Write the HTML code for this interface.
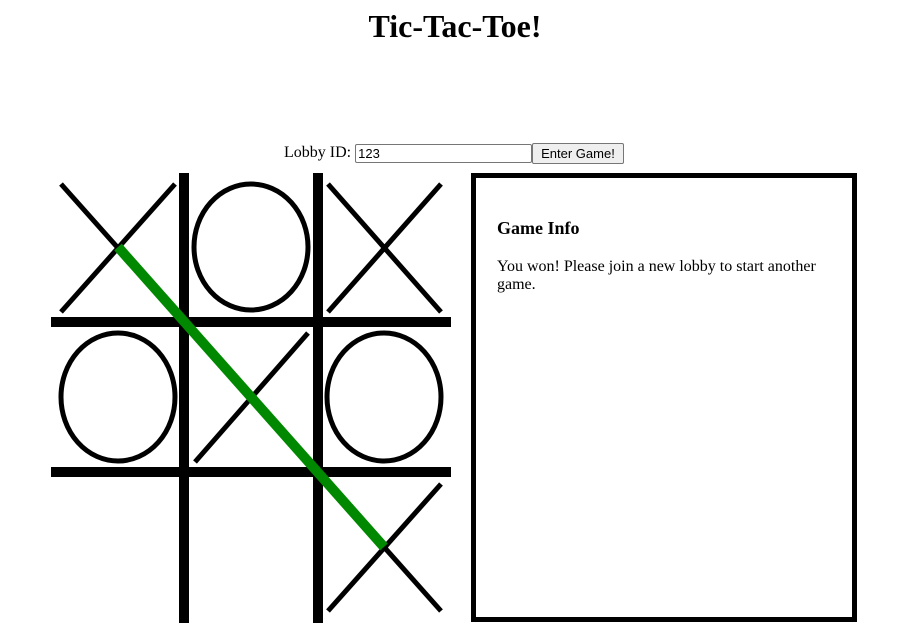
<!DOCTYPE html>
<html><head><style>
body{margin:0;width:910px;height:638px;background:#fff;font-family:"Liberation Serif",serif;position:relative;overflow:hidden}
h1{position:absolute;top:8px;left:0;width:910px;text-align:center;margin:0;font-size:32px;line-height:37px}
.lobby{position:absolute;top:142px;left:284px;font-size:16px;display:flex;align-items:center;height:22px}
.lobby input{width:171px;height:17px;border:1px solid #767676;border-radius:2px;padding:0 2px;font:13px "Liberation Sans",sans-serif;margin-left:4px;box-sizing:content-box}
.lobby button{font:13px "Liberation Sans",sans-serif;height:21px;padding:0 8px;border:1px solid #767676;border-radius:2px;background:#efefef}
svg{position:absolute;left:51px;top:173px}
.info{position:absolute;left:471px;top:173px;width:376px;height:439px;border:5px solid #000}
.info h3{margin:0;position:absolute;left:21px;top:40px;font-size:18px}
.info p{margin:0;position:absolute;left:21px;top:80px;width:340px;font-size:16px;line-height:18px}
</style></head><body>
<h1>Tic-Tac-Toe!</h1>
<div class="lobby">Lobby ID:<input value="123"><button>Enter Game!</button></div>
<svg width="400" height="450" viewBox="0 0 400 450">
<g stroke="#000" stroke-width="10">
<line x1="133" y1="0" x2="133" y2="450"/><line x1="267" y1="0" x2="267" y2="450"/>
<line x1="0" y1="149" x2="400" y2="149"/><line x1="0" y1="299" x2="400" y2="299"/>
</g>
<g stroke="#000" stroke-width="5" fill="none">
<line x1="10" y1="11" x2="124" y2="139"/><line x1="124" y1="11" x2="10" y2="139"/>
<line x1="277" y1="11" x2="390" y2="139"/><line x1="390" y1="11" x2="277" y2="139"/>
<line x1="144" y1="160" x2="257" y2="289"/><line x1="257" y1="160" x2="144" y2="289"/>
<line x1="277" y1="311" x2="390" y2="438"/><line x1="390" y1="311" x2="277" y2="438"/>
<ellipse cx="200" cy="74" rx="57" ry="63"/>
<ellipse cx="67" cy="224" rx="57" ry="64"/>
<ellipse cx="333" cy="224" rx="57" ry="64"/>
</g>
<line x1="67" y1="74" x2="333" y2="374" stroke="#008800" stroke-width="10"/>
</svg>
<div class="info"><h3>Game Info</h3><p>You won! Please join a new lobby to start another game.</p></div>
</body></html>
